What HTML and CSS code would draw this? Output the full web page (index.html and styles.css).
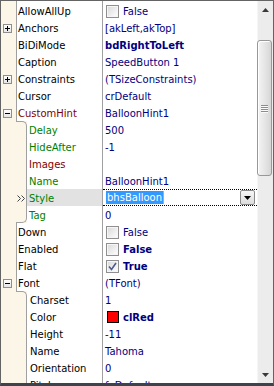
FILE: index.html
```html
<!DOCTYPE html>
<html>
<head>
<meta charset="utf-8">
<link rel="stylesheet" href="styles.css">
</head>
<body>
<div class="win">
  <div class="list">
    <div class="row spacer"><div class="g"></div><div class="nm"></div><div class="vl"></div></div>
    <div class="row"><div class="g"></div><div class="nm">AllowAllUp</div><div class="vl"><span class="cb"></span>False</div></div>
    <div class="row"><div class="g"><span class="xb plus"></span></div><div class="nm">Anchors</div><div class="vl">[akLeft,akTop]</div></div>
    <div class="row"><div class="g"></div><div class="nm">BiDiMode</div><div class="vl b">bdRightToLeft</div></div>
    <div class="row"><div class="g"></div><div class="nm">Caption</div><div class="vl">SpeedButton 1</div></div>
    <div class="row"><div class="g"><span class="xb plus"></span></div><div class="nm">Constraints</div><div class="vl">(TSizeConstraints)</div></div>
    <div class="row"><div class="g"></div><div class="nm">Cursor</div><div class="vl">crDefault</div></div>
    <div class="row"><div class="g"><span class="xb"></span></div><div class="nm ref">CustomHint</div><div class="vl">BalloonHint1</div></div>
    <div class="row"><div class="g n"><div class="ext f"></div></div><div class="nm sub">Delay</div><div class="vl">500</div></div>
    <div class="row"><div class="g n"><div class="ext"></div></div><div class="nm sub">HideAfter</div><div class="vl">-1</div></div>
    <div class="row"><div class="g n"><div class="ext"></div></div><div class="nm sub ref">Images</div><div class="vl"></div></div>
    <div class="row"><div class="g n"><div class="ext"></div></div><div class="nm sub">Name</div><div class="vl">BalloonHint1</div></div>
    <div class="row sel"><div class="g n"><div class="ext"><svg class="mark" width="9" height="7" viewBox="0 0 9 7"><polyline points="0.5,0.5 3.5,3.5 0.5,6.5" fill="none" stroke="#444" stroke-width="1"/><polyline points="4.5,0.5 7.5,3.5 4.5,6.5" fill="none" stroke="#444" stroke-width="1"/></svg></div></div><div class="nm sub">Style</div><div class="vl edit"><span class="hl">bhsBalloon</span><span class="dd"><svg width="7" height="4" viewBox="0 0 7 4"><polygon points="0,0 7,0 3.5,4" fill="#000"/></svg></span></div></div>
    <div class="row"><div class="g n"><div class="ext l"></div></div><div class="nm sub">Tag</div><div class="vl">0</div></div>
    <div class="row"><div class="g"></div><div class="nm">Down</div><div class="vl"><span class="cb"></span>False</div></div>
    <div class="row"><div class="g"></div><div class="nm">Enabled</div><div class="vl b"><span class="cb"></span>False</div></div>
    <div class="row"><div class="g"></div><div class="nm">Flat</div><div class="vl b"><span class="cb"><svg width="9" height="9" viewBox="0 0 9 9"><path d="M1 4.5 L3.5 7.5 L8 1" fill="none" stroke="#4a5d8c" stroke-width="1.6"/></svg></span>True</div></div>
    <div class="row"><div class="g"><span class="xb"></span></div><div class="nm">Font</div><div class="vl">(TFont)</div></div>
    <div class="row"><div class="g n"><div class="ext f"></div></div><div class="nm sub2">Charset</div><div class="vl">1</div></div>
    <div class="row"><div class="g n"><div class="ext"></div></div><div class="nm sub2">Color</div><div class="vl b"><span class="sw"></span>clRed</div></div>
    <div class="row"><div class="g n"><div class="ext"></div></div><div class="nm sub2">Height</div><div class="vl">-11</div></div>
    <div class="row"><div class="g n"><div class="ext"></div></div><div class="nm sub2">Name</div><div class="vl">Tahoma</div></div>
    <div class="row"><div class="g n"><div class="ext"></div></div><div class="nm sub2">Orientation</div><div class="vl">0</div></div>
    <div class="row"><div class="g n"><div class="ext"></div></div><div class="nm sub2">Pitch</div><div class="vl">fpDefault</div></div>
  </div>
  <div class="sb">
    <div class="sbtn"><svg width="7" height="4" viewBox="0 0 7 4"><polygon points="3.5,0 7,4 0,4" fill="#3a3a3a"/></svg></div>
    <div class="track">
      <div class="thumb"><span class="grip"></span><span class="grip"></span><span class="grip"></span><span class="grip"></span></div>
    </div>
    <div class="sbtn"><svg width="7" height="4" viewBox="0 0 7 4"><polygon points="0,0 7,0 3.5,4" fill="#3a3a3a"/></svg></div>
  </div>
</div>
</body>
</html>
```

FILE: styles.css
```css
* { box-sizing: border-box; }
html, body { margin: 0; padding: 0; background: #fff; }

.win {
  width: 274px;
  height: 386px;
  border: 1px solid #646464;
  border-bottom: 3px solid #3c434c;
  display: flex;
  overflow: hidden;
  font-family: "DejaVu Sans", sans-serif;
  font-size: 10px;
  color: #000;
}

.list {
  width: 256px;
  height: 382px;
  overflow: hidden;
  display: flex;
  flex-direction: column;
}

.row {
  display: flex;
  flex: 0 0 17px;
  height: 17px;
}
.row.spacer { flex: 0 0 1px; height: 1px; }

.g {
  flex: 0 0 16px;
  background: #fcf6e8;
  border-right: 1px solid #a0a0a0;
  display: flex;
  align-items: center;
  padding: 2px 0 0 2px;
}
.g.n {
  flex: 0 0 26px;
  border-right: 0;
  padding: 0 0 0 15px;
  align-items: stretch;
}
.ext {
  width: 11px;
  border-right: 1px solid #a0a0a0;
  display: flex;
  align-items: center;
  padding-left: 1px;
}
.ext.f { border-top: 1px solid #a0a0a0; border-top-right-radius: 5px; }
.ext.l { border-bottom: 1px solid #a0a0a0; border-bottom-right-radius: 5px; }
.mark { display: block; margin-top: 1px; }

.xb {
  position: relative;
  width: 9px;
  height: 9px;
  border: 1px solid #8e8e8e;
  background: linear-gradient(#ffffff, #e6e6e6);
}
.xb::before {
  content: "";
  position: absolute;
  left: 1px; top: 3px;
  width: 5px; height: 1px;
  background: #000;
}
.xb.plus::after {
  content: "";
  position: absolute;
  left: 3px; top: 1px;
  width: 1px; height: 5px;
  background: #000;
}

.nm {
  flex: 1 1 auto;
  border-right: 1px solid #a0a0a0;
  padding: 1px 0 0 1px;
  line-height: 17px;
  white-space: nowrap;
  overflow: hidden;
}
.nm.sub { color: #008000; padding-left: 2px; }
.nm.sub2 { padding-left: 3px; }
.nm.ref { color: #800000; }

.vl {
  flex: 0 0 154px;
  width: 154px;
  padding: 1px 0 0 2px;
  line-height: 17px;
  color: #000080;
  white-space: nowrap;
  overflow: hidden;
}
.vl.b { font-weight: bold; }

.cb {
  display: inline-block;
  width: 13px;
  height: 13px;
  margin: 0 4px 0 1px;
  vertical-align: -3px;
  border: 1px solid #8f8f8f;
  background: linear-gradient(135deg, #d8d8d8, #f4f4f4 70%, #ffffff);
  box-shadow: inset 0 0 0 1px #f6f6f6;
  padding: 1px 0 0 1px;
}
.cb svg { display: block; }

.sw {
  display: inline-block;
  width: 12px;
  height: 12px;
  margin: 0 4px 0 2px;
  vertical-align: -2px;
  border: 1px solid #000;
  background: #ff0000;
}

.row.sel .nm { background: #e2e2e2; }
.vl.edit {
  display: flex;
  align-items: center;
  padding: 0 2px 0 3px;
  border-top: 1px dotted #000;
  border-bottom: 1px dotted #000;
}
.hl {
  background: #3399ff;
  color: #fff;
  line-height: 13px;
  height: 13px;
  padding: 0 1px;
  border-right: 1px solid #f0a040;
}
.dd {
  margin-left: auto;
  width: 15px;
  height: 15px;
  border: 1px solid #8a8a8a;
  border-radius: 2px;
  background: linear-gradient(#f6f6f6, #dcdcdc);
  display: flex;
  align-items: center;
  justify-content: center;
}
.dd svg { display: block; }

.sb {
  flex: 0 0 16px;
  width: 16px;
  height: 382px;
  background: #ececec;
  border-left: 1px solid #f6f6f6;
  display: flex;
  flex-direction: column;
}
.sbtn {
  flex: 0 0 17px;
  display: flex;
  align-items: center;
  justify-content: center;
}
.sbtn svg { display: block; }
.track { flex: 1 1 auto; padding-top: 22px; }
.thumb {
  height: 136px;
  width: 15px;
  margin-left: -1px;
  border: 1px solid #989898;
  border-radius: 3px;
  background: linear-gradient(to right, #f4f4f4, #e6e6e6 50%, #d6d6d6);
  box-shadow: inset 1px 1px 0 #ffffff;
  display: flex;
  flex-direction: column;
  align-items: center;
  justify-content: center;
  gap: 1px;
}
.grip {
  display: block;
  width: 7px;
  height: 1px;
  background: #8c8c8c;
  box-shadow: 0 1px 0 #fafafa;
}
```
